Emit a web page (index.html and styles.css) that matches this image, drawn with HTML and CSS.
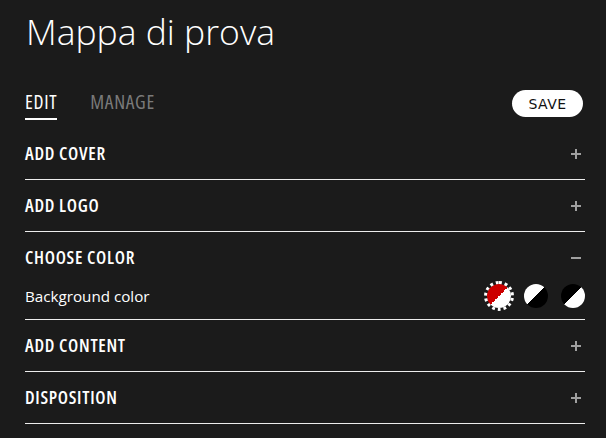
FILE: index.html
```html
<!DOCTYPE html>
<html>
<head>
<meta charset="utf-8">
<link rel="stylesheet" href="styles.css">
</head>
<body>
<div class="page">
  <h1 class="title">Mappa di prova</h1>
  <div class="tabs">
    <div class="tab-list">
      <span class="tab active">EDIT</span>
      <span class="tab">MANAGE</span>
    </div>
    <button class="save">SAVE</button>
  </div>
  <div class="section">
    <div class="section-head"><span>ADD COVER</span><span class="icon plus"></span></div>
  </div>
  <div class="section">
    <div class="section-head"><span>ADD LOGO</span><span class="icon plus"></span></div>
  </div>
  <div class="section open">
    <div class="section-head"><span>CHOOSE COLOR</span><span class="icon minus"></span></div>
    <div class="section-body">
      <span class="label">Background color</span>
      <div class="swatches">
        <span class="swatch selected"><span class="dot red-white"></span></span>
        <span class="swatch"><span class="dot white-black"></span></span>
        <span class="swatch"><span class="dot black-white"></span></span>
      </div>
    </div>
  </div>
  <div class="section">
    <div class="section-head"><span>ADD CONTENT</span><span class="icon plus"></span></div>
  </div>
  <div class="section">
    <div class="section-head"><span>DISPOSITION</span><span class="icon plus"></span></div>
  </div>
</div>
</body>
</html>
```
FILE: styles.css
```css
html, body {
  margin: 0;
  background: #1b1b1b;
}
.page {
  padding: 11px 21px 0 25px;
  color: #fff;
  font-family: "Open Sans", sans-serif;
}
.title {
  margin: 0 0 0 1px;
  font-size: 35.5px;
  line-height: 40px;
  font-weight: 300;
}
.tabs {
  margin-top: 37px;
  height: 40px;
  display: flex;
  justify-content: space-between;
  align-items: flex-start;
}
.tab-list {
  display: flex;
  gap: 33px;
}
.tab {
  font-family: "Open Sans", sans-serif;
  font-stretch: 75%;
  font-size: 19.5px;
  letter-spacing: 0.7px;
  line-height: 24px;
  padding-top: 2px;
  padding-bottom: 4px;
  color: #7a7a7a;
  font-weight: 500;
}
.tab.active {
  color: #fff;
  border-bottom: 2px solid #fff;
}
.save {
  margin-top: 2px;
  width: 71px;
  height: 27px;
  border: none;
  border-radius: 14px;
  background: #fff;
  color: #111;
  font-family: "DejaVu Sans", sans-serif;
  font-size: 14px;
  letter-spacing: 0.4px;
  padding: 0;
  margin-right: 2px;
}
.section {
  border-bottom: 1px solid #ededed;
}
.section-head {
  height: 51px;
  display: flex;
  justify-content: space-between;
  align-items: center;
  font-family: "Open Sans", sans-serif;
  font-stretch: 75%;
  font-weight: 600;
  font-size: 18px;
  letter-spacing: 0.7px;
}
.section-head > span:first-child {
  margin-top: -2px;
}
.icon {
  position: relative;
  width: 10px;
  height: 10px;
  margin-right: 4px;
}
.icon::before, .icon::after {
  content: "";
  position: absolute;
  background: #a0a0a0;
}
.icon::before {
  left: 0;
  top: 4px;
  width: 10px;
  height: 2px;
}
.plus::after {
  left: 4px;
  top: 0;
  width: 2px;
  height: 10px;
}
.minus::after {
  display: none;
}
.section-body {
  height: 26px;
  padding-bottom: 10px;
  display: flex;
  justify-content: space-between;
  align-items: center;
}
.label {
  font-size: 15.2px;
  font-family: "Open Sans", sans-serif;
}
.swatches {
  display: flex;
  gap: 13px;
  align-items: center;
}
.swatch {
  width: 24px;
  height: 24px;
  border-radius: 50%;
  display: flex;
  align-items: center;
  justify-content: center;
}
.swatch.selected {
  outline: 3px dotted #fff;
  outline-offset: 0px;
}
.dot {
  width: 24px;
  height: 24px;
  border-radius: 50%;
}
.red-white { background: linear-gradient(135deg, #cc0000 50%, #fff 50%); }
.white-black { background: linear-gradient(135deg, #fff 50%, #000 50%); }
.black-white { background: linear-gradient(135deg, #000 50%, #fff 50%); }
```
